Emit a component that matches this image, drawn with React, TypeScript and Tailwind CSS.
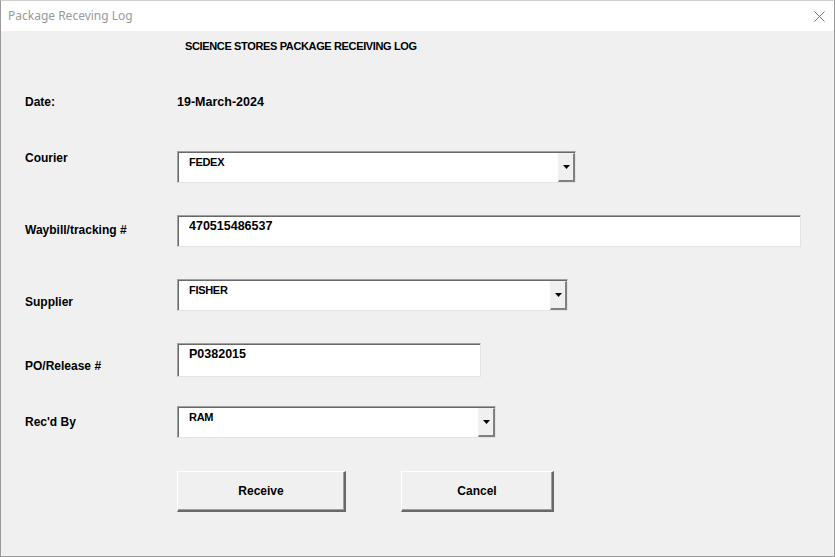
import React from "react";

const font = { fontFamily: '"Liberation Sans", Arial, sans-serif' };

function Arrow() {
  return (
    <svg width="7" height="4" viewBox="0 0 7 4">
      <polygon points="0,0 7,0 3.5,4" fill="#000" />
    </svg>
  );
}

function Field({ w, h = 32, value, combo = false, caps = false }: { w: number; h?: number; value: string; combo?: boolean; caps?: boolean }) {
  return (
    <div
      className="flex bg-white border border-t-[#a0a0a0] border-l-[#a0a0a0] border-b-[#e3e3e3] border-r-[#e3e3e3] shadow-[inset_1px_1px_0_#696969]"
      style={{ width: w, height: h }}
    >
      <div className={(caps ? "text-[11px] tracking-[-0.3px]" : "text-[12.5px]") + " flex-1 pl-[11px] pt-[4px] leading-[13px] font-bold text-black"}>{value}</div>
      {combo && (
        <div className="w-[17px] mt-[1px] flex items-center justify-center bg-[#f0f0f0] border-l border-t border-l-[#f0f0f0] border-t-[#f0f0f0] border-r-2 border-b-2 border-r-[#808080] border-b-[#808080]">
          <Arrow />
        </div>
      )}
    </div>
  );
}

function Btn({ w, label }: { w: number; label: string }) {
  return (
    <div
      className="h-[41px] flex items-center justify-center bg-[#f0f0f0] border-t border-l border-t-white border-l-white border-r-2 border-b-2 border-r-[#696969] border-b-[#696969] shadow-[inset_-1px_-1px_0_#a0a0a0] text-[12px] font-bold text-black"
      style={{ width: w }}
    >
      {label}
    </div>
  );
}

function Label({ top, children }: { top: number; children: React.ReactNode }) {
  return (
    <div className="w-[152px] text-[12px] leading-[13px] font-bold text-black" style={{ marginTop: top }}>
      {children}
    </div>
  );
}

export default function App() {
  return (
    <div className="w-[835px] h-[557px] flex flex-col bg-[#f0f0f0] border border-[#9a9a9a] border-t-[#d0d0d0] overflow-hidden" style={font}>
      <div className="h-[30px] bg-white flex items-center justify-between pl-[7px] pr-[9px] shrink-0">
        <span className="text-[12px] text-[#9a9a9a]" style={{ fontFamily: '"Noto Sans", "Open Sans", sans-serif' }}>
          Package Receving Log
        </span>
        <svg width="11" height="11" viewBox="0 0 11 11">
          <line x1="0.5" y1="0.5" x2="10.5" y2="10.5" stroke="#777" strokeWidth="1" />
          <line x1="10.5" y1="0.5" x2="0.5" y2="10.5" stroke="#777" strokeWidth="1" />
        </svg>
      </div>
      <div className="flex-1 flex flex-col pl-[24px]">
        <div className="mt-[9px] pl-[160px] h-[13px] text-[11px] tracking-[-0.36px] leading-[13px] font-bold text-black">
          SCIENCE STORES PACKAGE RECEIVING LOG
        </div>
        <div className="mt-[43px] h-[13px] flex leading-[13px] font-bold text-black">
          <div className="w-[152px] text-[12px]">Date:</div>
          <div className="text-[12.5px]">19-March-2024</div>
        </div>
        <div className="mt-[42px] flex items-start h-[32px]">
          <Label top={1}>Courier</Label>
          <Field w={399} value="FEDEX" combo caps />
        </div>
        <div className="mt-[32px] flex items-start h-[32px]">
          <Label top={9}>Waybill/tracking #</Label>
          <Field w={624} value="470515486537" />
        </div>
        <div className="mt-[32px] flex items-start h-[32px]">
          <Label top={17}>Supplier</Label>
          <Field w={391} value="FISHER" combo caps />
        </div>
        <div className="mt-[32px] flex items-start h-[34px]">
          <Label top={17}>PO/Release #</Label>
          <Field w={304} h={34} value="P0382015" />
        </div>
        <div className="mt-[29px] flex items-start h-[32px]">
          <Label top={10}>Rec'd By</Label>
          <Field w={319} value="RAM" combo caps />
        </div>
        <div className="mt-[33px] flex items-start pl-[152px] gap-[55px]">
          <Btn w={169} label="Receive" />
          <Btn w={153} label="Cancel" />
        </div>
      </div>
    </div>
  );
}
